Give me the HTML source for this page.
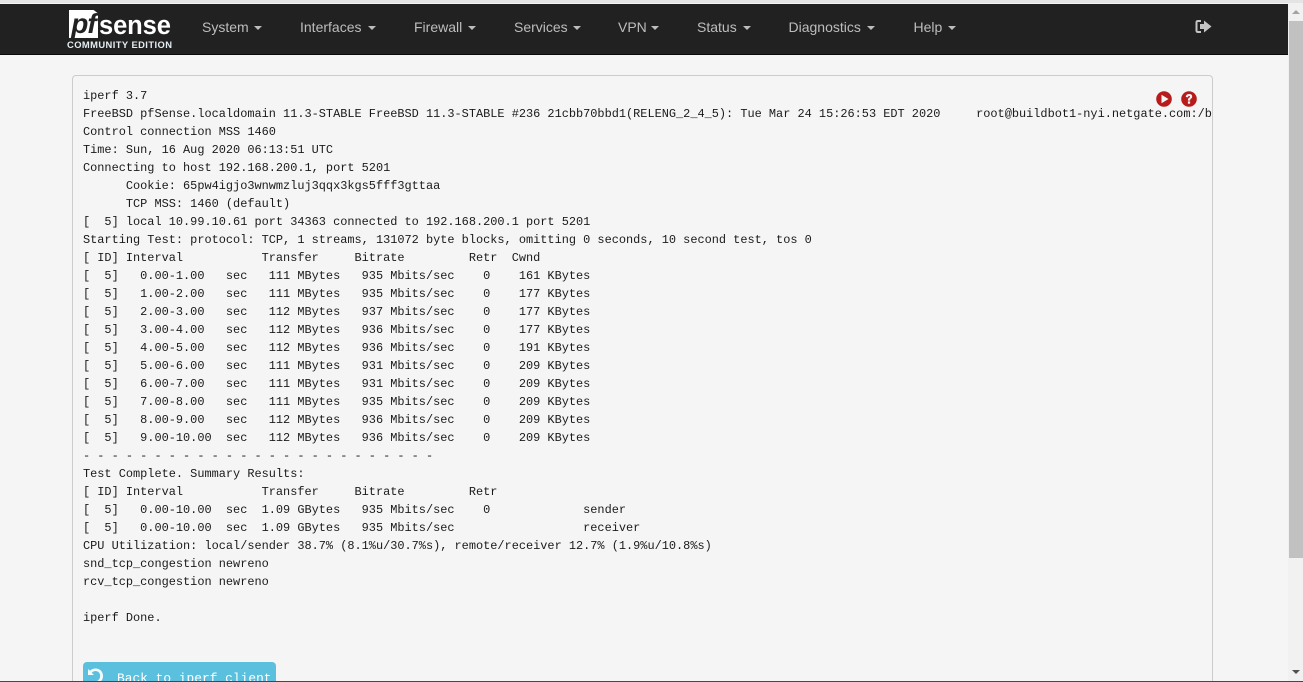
<!DOCTYPE html>
<html><head><meta charset="utf-8"><style>
html,body{margin:0;padding:0;width:1303px;height:682px;overflow:hidden;background:#f5f5f5;font-family:"Liberation Sans",sans-serif}
#root{position:absolute;left:0;top:0;width:1303px;height:682px;overflow:hidden;background:#f5f5f5}
#root div,#root pre,#root svg{position:absolute}
#nav{left:0;top:4px;width:1288px;height:50px;background:#212121;border-bottom:1px solid #0a0a0a}
.m{top:19px;font-size:14px;line-height:16px;color:#bdbdbd;white-space:nowrap}
.m i{position:absolute;top:7px;width:0;height:0;border-left:4px solid transparent;border-right:4px solid transparent;border-top:4px solid #bdbdbd}
#panel{left:72px;top:75px;width:1139px;height:606px;border:1px solid #ccc;border-bottom:0;border-radius:4px 4px 0 0;background:#f5f5f5}
#txt{left:83px;top:87px;width:1129px;height:560px;overflow:hidden;margin:0;font:11.92px/18px "Liberation Mono",monospace;color:#1a1a1a;white-space:pre}
#btn{left:83px;top:662px;width:193px;height:20px;background:#5bc0de;border-radius:4px 4px 0 0}
#sb{left:1288px;top:0;width:15px;height:682px;background:#f1f1f1}
</style></head><body>
<div id="root">
<div id="nav"></div>
<div style="left:69px;top:10px;width:29px;height:28px;background:#fff;clip-path:polygon(0 0,85% 0,100% 12%,100% 100%,0 100%)"></div>
<div style="left:69px;top:9px;width:29px;font:italic bold 28px/30px 'Liberation Sans',sans-serif;letter-spacing:-1px;color:#212121;text-align:center">pf</div>
<div style="left:99px;top:12px;font:bold 25.5px/28px 'Liberation Sans',sans-serif;color:#fff;letter-spacing:-.1px">sense</div>
<div style="left:67px;top:39px;width:106px;font:bold 9.4px/11px 'Liberation Sans',sans-serif;color:#e4eef2;letter-spacing:.42px;white-space:nowrap">COMMUNITY EDITION</div>
<div class="m" style="left:202px">System<i style="left:52px"></i></div>
<div class="m" style="left:300px">Interfaces<i style="left:68px"></i></div>
<div class="m" style="left:414px">Firewall<i style="left:54px"></i></div>
<div class="m" style="left:514px">Services<i style="left:59px"></i></div>
<div class="m" style="left:618px">VPN<i style="left:33px"></i></div>
<div class="m" style="left:697px">Status<i style="left:46px"></i></div>
<div class="m" style="left:788.5px">Diagnostics<i style="left:78.5px"></i></div>
<div class="m" style="left:913.5px">Help<i style="left:34.5px"></i></div>
<svg style="left:1195px;top:19px" width="17" height="16" viewBox="0 0 17 16"><path d="M6 2H3Q1.500 2 1.500 3.500V11.500Q1.500 13 3 13H6" fill="none" stroke="#c4c4c4" stroke-width="2"/><path d="M5 5H9V1.500L16.500 7.500 9 13.500V10H5Z" fill="#c4c4c4"/></svg>
<div id="panel"></div>
<pre id="txt">iperf 3.7
FreeBSD pfSense.localdomain 11.3-STABLE FreeBSD 11.3-STABLE #236 21cbb70bbd1(RELENG_2_4_5): Tue Mar 24 15:26:53 EDT 2020     root@buildbot1-nyi.netgate.com:/builder/pfsense
Control connection MSS 1460
Time: Sun, 16 Aug 2020 06:13:51 UTC
Connecting to host 192.168.200.1, port 5201
      Cookie: 65pw4igjo3wnwmzluj3qqx3kgs5fff3gttaa
      TCP MSS: 1460 (default)
[  5] local 10.99.10.61 port 34363 connected to 192.168.200.1 port 5201
Starting Test: protocol: TCP, 1 streams, 131072 byte blocks, omitting 0 seconds, 10 second test, tos 0
[ ID] Interval           Transfer     Bitrate         Retr  Cwnd
[  5]   0.00-1.00   sec   111 MBytes   935 Mbits/sec    0    161 KBytes
[  5]   1.00-2.00   sec   111 MBytes   935 Mbits/sec    0    177 KBytes
[  5]   2.00-3.00   sec   112 MBytes   937 Mbits/sec    0    177 KBytes
[  5]   3.00-4.00   sec   112 MBytes   936 Mbits/sec    0    177 KBytes
[  5]   4.00-5.00   sec   112 MBytes   936 Mbits/sec    0    191 KBytes
[  5]   5.00-6.00   sec   111 MBytes   931 Mbits/sec    0    209 KBytes
[  5]   6.00-7.00   sec   111 MBytes   931 Mbits/sec    0    209 KBytes
[  5]   7.00-8.00   sec   111 MBytes   935 Mbits/sec    0    209 KBytes
[  5]   8.00-9.00   sec   112 MBytes   936 Mbits/sec    0    209 KBytes
[  5]   9.00-10.00  sec   112 MBytes   936 Mbits/sec    0    209 KBytes
- - - - - - - - - - - - - - - - - - - - - - - - -
Test Complete. Summary Results:
[ ID] Interval           Transfer     Bitrate         Retr
[  5]   0.00-10.00  sec  1.09 GBytes   935 Mbits/sec    0             sender
[  5]   0.00-10.00  sec  1.09 GBytes   935 Mbits/sec                  receiver
CPU Utilization: local/sender 38.7% (8.1%u/30.7%s), remote/receiver 12.7% (1.9%u/10.8%s)
snd_tcp_congestion newreno
rcv_tcp_congestion newreno

iperf Done.</pre>
<svg style="left:1156px;top:91px" width="16" height="16" viewBox="0 0 16 16"><circle cx="8" cy="8" r="7.800" fill="#b71c1c"/><path d="M5.500 3.800L12.500 8 5.500 12.200Z" fill="#f5f5f5"/></svg>
<svg style="left:1181px;top:91px" width="16" height="16" viewBox="0 0 16 16"><circle cx="8" cy="8" r="7.800" fill="#b71c1c"/><path d="M4.800 6Q5 3 8 3 11.200 3 11.200 5.700 11.200 7.100 9.700 7.900 9.100 8.300 9.100 9.600H6.900V8.800Q6.900 7.500 8.100 6.800 9 6.300 9 5.700 9 5 8 5 7 5 6.800 6.400Z" fill="#f5f5f5"/><rect x="6.900" y="10.400" width="2.200" height="2.300" fill="#f5f5f5"/></svg>
<div id="btn"></div>
<svg style="left:87px;top:668px" width="18" height="13" viewBox="0 0 18 13"><path d="M1 1V7H7L4.700 4.700Q6.500 3 8.500 3 13 3.200 13.200 8 13 12 9 13.500L11 15Q16 13 16 8 15.500 .8 8.500 .5 5 .5 3 2.800Z" fill="#f4fbfd"/></svg>
<div style="left:117px;top:671px;height:10px;overflow:hidden;font:12.88px/16px 'Liberation Mono',monospace;color:#fff;white-space:pre">Back to iperf client</div>
<div id="sb"></div>
<div style="left:1289px;top:21px;width:14px;height:537px;background:#c1c1c1"></div>
<div style="left:1292px;top:10px;width:0;height:0;border-left:4px solid transparent;border-right:4px solid transparent;border-bottom:4px solid #a3a3a3"></div>
<div style="left:1292px;top:670px;width:0;height:0;border-left:4px solid transparent;border-right:4px solid transparent;border-top:4px solid #505050"></div>
<div style="left:0;top:0;width:1303px;height:3px;background:#e4e4e4"></div>
<div style="left:0;top:681px;width:1303px;height:1px;background:#2b4a80"></div>
</div>
</body></html>
